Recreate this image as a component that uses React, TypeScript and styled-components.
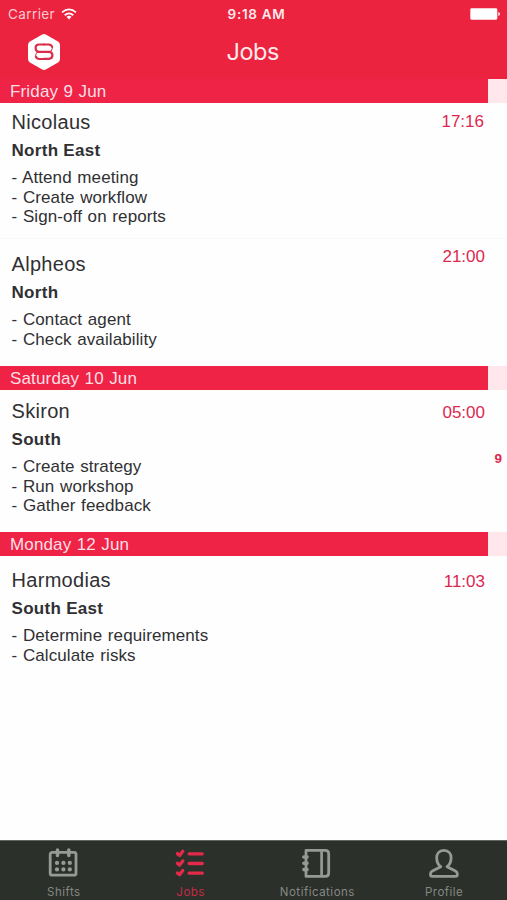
import React from "react";
import styled, { createGlobalStyle } from "styled-components";

const GlobalStyle = createGlobalStyle`
  * { box-sizing: border-box; }
  body { margin: 0; background: #fff; }
`;

const Screen = styled.div`
  display: flex;
  flex-direction: column;
  width: 507px;
  height: 900px;
  overflow: hidden;
  background: #fefefe;
  color: #303033;
  font-family: "Liberation Sans", Arial, sans-serif;
  white-space: nowrap;
`;

const TopBar = styled.header`
  flex: none;
  height: 79px;
  background: #eb233e;
  color: #ffe9ec;
  font-family: Inter, sans-serif;
`;

const StatusBar = styled.div`
  display: grid;
  grid-template-columns: 1fr auto 1fr;
  align-items: center;
  height: 27px;
  padding: 0 6px 0 8px;
`;

const Carrier = styled.div`
  display: flex;
  align-items: center;
  gap: 6px;
  font-size: 13.5px;
  letter-spacing: 0.4px;
  color: #ffc9d0;
`;

const Clock = styled.div`
  font-size: 13.5px;
  font-weight: 600;
  letter-spacing: 0.7px;
  padding-left: 4px;
`;

const BatterySlot = styled.div`
  display: flex;
  justify-content: flex-end;
`;

const NavBar = styled.div`
  display: grid;
  grid-template-columns: 1fr auto 1fr;
  align-items: center;
  height: 50px;
  padding: 0 28px 0 26.5px;
`;

const Title = styled.h1`
  margin: 0;
  font-size: 23.5px;
  font-weight: 400;
  letter-spacing: -0.4px;
  line-height: 30px;
`;

const List = styled.main`
  flex: 1;
`;

const DayBar = styled.h2`
  display: flex;
  height: 24px;
  margin: 0;
  padding-left: 10px;
  border-right: 19px solid #ffe7ec;
  background: #ee2345;
  color: #ffdfe6;
  font-size: 17px;
  font-weight: 400;
  letter-spacing: 0.15px;
  word-spacing: 0.5px;
  line-height: 25px;
`;

const Row = styled.article<{ $height: number; $top: number; $divided?: boolean }>`
  display: flex;
  justify-content: space-between;
  height: ${(p) => p.$height}px;
  padding: ${(p) => p.$top}px 0 0 11.5px;
  border-top: ${(p) => (p.$divided ? "1px solid #f9f9f9" : "0")};
`;

const Name = styled.h3`
  margin: 0;
  font-size: 20px;
  font-weight: 400;
  letter-spacing: 0.3px;
  line-height: 24px;
`;

const Region = styled.div`
  margin-top: 5px;
  font-size: 17px;
  font-weight: 700;
  letter-spacing: 0.3px;
  line-height: 24px;
`;

const Tasks = styled.ul`
  margin: 5px 0 0;
  padding: 0;
  list-style: none;
  font-size: 17px;
  letter-spacing: 0.1px;
  word-spacing: 0.8px;
  line-height: 19.5px;
`;

const Side = styled.div<{ $shift: number; $inset: number }>`
  display: flex;
  flex-direction: column;
  align-items: flex-end;
  margin-top: ${(p) => p.$shift}px;
  padding-right: 5px;
  color: #dc2850;

  time {
    margin-right: ${(p) => p.$inset}px;
    font-size: 17px;
    line-height: 22px;
  }
`;

const Count = styled.span`
  margin-top: 26px;
  font-size: 13.5px;
  font-weight: 700;
  line-height: 18px;
`;

const TabBar = styled.nav`
  display: grid;
  grid-template-columns: repeat(4, 1fr);
  flex: none;
  height: 60px;
  border-top: 1px solid #60655e;
  background: #2b302a;
`;

const Tab = styled.div<{ $active?: boolean }>`
  display: flex;
  flex-direction: column;
  align-items: center;
  padding-top: 7px;
  color: ${(p) => (p.$active ? "#e42a4a" : "#969a95")};
`;

const TabIcon = styled.span`
  display: flex;
  height: 31px;
`;

const TabLabel = styled.span<{ $active?: boolean }>`
  margin-top: 5px;
  padding-left: 1px;
  font-family: Inter, sans-serif;
  font-size: 11.5px;
  letter-spacing: 0.5px;
  line-height: 16px;
  color: ${(p) => (p.$active ? "#c82946" : "#858984")};
`;

const WifiIcon = () => (
  <svg width="16" height="12" viewBox="0 0 16 12" fill="none" stroke="#fff" strokeWidth="1.8">
    <path d="M1 4.4Q8-1.7 15 4.4M3.7 7.2Q8 3.5 12.3 7.2" />
    <path d="M5.5 8.8Q8 6.8 10.5 8.8L8 11.4Z" fill="#fff" stroke="none" />
  </svg>
);

const BatteryIcon = () => (
  <svg width="31" height="12" viewBox="0 0 31 12" fill="#fff">
    <rect x="0.3" y="0.3" width="27" height="11.4" rx="1.4" />
    <path d="M28.3 4Q30 4.5 30 6T28.3 8Z" />
  </svg>
);

const Logo = () => (
  <svg width="34" height="38" viewBox="0 0 34 38">
    <path
      d="M14.8 1.7Q17 .5 19.2 1.7L31 8.5Q33 9.7 33 12V26Q33 28.3 31 29.5L19.2 36.3Q17 37.5 14.8 36.3L3 29.5Q1 28.3 1 26V12Q1 9.7 3 8.5Z"
      fill="#fff"
    />
    <g fill="none" stroke="#d92d49" strokeLinecap="round">
      <path d="M17 11.5H12.2Q8.6 11.5 8.6 15.1T12.2 18.8H21.8Q25.4 18.8 25.4 22.3T21.8 25.9H17" strokeWidth="2.2" />
      <path d="M17 11.5H21.8Q25.4 11.5 25.4 15.1T21.8 18.8M12.2 18.8Q8.6 18.8 8.6 22.3T12.2 25.9H17" strokeWidth="1" />
      <path d="M17 11.5H21.5Q24.5 11.5 25.2 14M8.8 23.4Q9.5 25.9 12.5 25.9H17" strokeWidth="2" />
    </g>
  </svg>
);

const CalendarIcon = () => (
  <svg width="30" height="30" viewBox="0 0 30 30" fill="none" stroke="currentColor">
    <rect x="2.2" y="4.3" width="25.8" height="22.9" rx="2" strokeWidth="2.8" />
    <path d="M9.5 1.9V7.6M20.8 1.9V7.6" strokeWidth="3.5" strokeLinecap="round" />
    <path d="M9 14.9h.01M15.4 14.9h.01M21.8 14.9h.01M9 21.4h.01M15.4 21.4h.01M21.8 21.4h.01" strokeWidth="4.3" strokeLinecap="round" />
  </svg>
);

const ChecklistIcon = () => (
  <svg width="30" height="30" viewBox="0 0 30 30" fill="none" stroke="currentColor">
    {[5.8, 15.5, 25.2].map((y) => (
      <g key={y}>
        <path d={`M2.4 ${y - 0.2}l2.2 1.8 3.2-4.2`} strokeWidth="3.3" strokeLinecap="round" strokeLinejoin="round" />
        <path d={`M14.2 ${y}H27.2`} strokeWidth="3.3" strokeLinecap="round" />
      </g>
    ))}
  </svg>
);

const NotebookIcon = () => (
  <svg width="30" height="31" viewBox="0 0 30 31" fill="none" stroke="currentColor">
    <path d="M4 2.4H23.2Q26.7 2.4 26.7 5.9V24.9Q26.7 28.4 23.2 28.4H4Z" strokeWidth="2.8" strokeLinejoin="round" />
    <path d="M19.6 2.4V28.4" strokeWidth="2.7" />
    <path d="M1.9 9H5M1.9 15.3H5M1.9 21.6H5" strokeWidth="3.6" strokeLinecap="round" />
  </svg>
);

const PersonIcon = () => (
  <svg width="32" height="31" viewBox="0 0 32 31" fill="none" stroke="currentColor" strokeWidth="2.8" strokeLinejoin="round">
    <path d="M15.9 2.4C11 2.4 8.7 5.8 8.7 10C8.7 13.8 10.2 16.8 12.8 18.7L4.4 23Q2.5 24 2.5 25.8V26.8Q2.5 28.4 4.1 28.4H27.7Q29.3 28.4 29.3 26.8V25.8Q29.3 24 27.4 23L19 18.7C21.6 16.8 23.1 13.8 23.1 10C23.1 5.8 20.8 2.4 15.9 2.4Z" />
  </svg>
);

type Job = {
  name: string;
  region: string;
  tasks: string[];
  time: string;
  height: number;
  top: number;
  shift: number;
  inset?: number;
  count?: number;
  divided?: boolean;
};

const days: { date: string; jobs: Job[] }[] = [
  {
    date: "Friday 9 Jun",
    jobs: [
      { name: "Nicolaus", region: "North East", tasks: ["Attend meeting", "Create workflow", "Sign-off on reports"], time: "17:16", height: 135, top: 7, shift: 1, inset: 18 },
      { name: "Alpheos", region: "North", tasks: ["Contact agent", "Check availability"], time: "21:00", height: 128, top: 13, shift: -6, divided: true },
    ],
  },
  {
    date: "Saturday 10 Jun",
    jobs: [
      { name: "Skiron", region: "South", tasks: ["Create strategy", "Run workshop", "Gather feedback"], time: "05:00", height: 142, top: 9, shift: 3, count: 9 },
    ],
  },
  {
    date: "Monday 12 Jun",
    jobs: [
      { name: "Harmodias", region: "South East", tasks: ["Determine requirements", "Calculate risks"], time: "11:03", height: 136, top: 12, shift: 3 },
    ],
  },
];

const tabs = [
  { label: "Shifts", Icon: CalendarIcon },
  { label: "Jobs", Icon: ChecklistIcon, active: true },
  { label: "Notifications", Icon: NotebookIcon },
  { label: "Profile", Icon: PersonIcon },
];

export default function App() {
  return (
    <>
      <GlobalStyle />
      <Screen>
        <TopBar>
          <StatusBar>
            <Carrier>Carrier <WifiIcon /></Carrier>
            <Clock>9:18 AM</Clock>
            <BatterySlot><BatteryIcon /></BatterySlot>
          </StatusBar>
          <NavBar>
            <Logo />
            <Title>Jobs</Title>
          </NavBar>
        </TopBar>
        <List>
          {days.map((day) => (
            <section key={day.date}>
              <DayBar>{day.date}</DayBar>
              {day.jobs.map((job) => (
                <Row key={job.name} $height={job.height} $top={job.top} $divided={job.divided}>
                  <div>
                    <Name>{job.name}</Name>
                    <Region>{job.region}</Region>
                    <Tasks>
                      {job.tasks.map((task) => <li key={task}>- {task}</li>)}
                    </Tasks>
                  </div>
                  <Side $shift={job.shift} $inset={job.inset ?? 17}>
                    <time>{job.time}</time>
                    {job.count !== undefined && <Count>{job.count}</Count>}
                  </Side>
                </Row>
              ))}
            </section>
          ))}
        </List>
        <TabBar>
          {tabs.map(({ label, Icon, active }) => (
            <Tab key={label} $active={active}>
              <TabIcon><Icon /></TabIcon>
              <TabLabel $active={active}>{label}</TabLabel>
            </Tab>
          ))}
        </TabBar>
      </Screen>
    </>
  );
}
